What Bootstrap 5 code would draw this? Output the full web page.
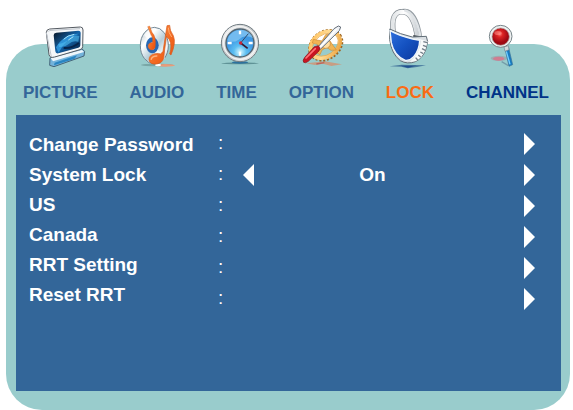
<!DOCTYPE html>
<html lang="en">
<head>
<meta charset="utf-8">
<meta name="viewport" content="width=device-width, initial-scale=1">
<title>Lock settings</title>
<link href="https://cdn.jsdelivr.net/npm/bootstrap@5.3.0/dist/css/bootstrap.min.css" rel="stylesheet">
<style>
body { font-family: "Liberation Sans", Arial, sans-serif; background: #fff; }
.osd { display: flow-root; margin: 44px 3px 0 6px; padding: 0 9px 19px 10px; background: #9cc; border-radius: 36px; }
.osd-tabs { margin-top: -44px; padding: 0 12px 0 7px; }
.osd-tab { color: #369; font-size: 17px; line-height: 20px; font-weight: 700; padding-bottom: 12px; text-decoration: none; }
.osd-tab svg { width: 40px; height: 72px; margin-bottom: 11px; overflow: visible; }
.osd-tab.active { color: #fa6c14; }
.osd-tab.dark { color: #038; }
.osd-panel { background: #369; color: #fff; padding: 13px 26px 77px 13px; font-size: 19px; }
.osd-labels { flex: 0 0 189px; line-height: 30px; padding-top: 2px; font-weight: 700; }
.osd-line { height: 31px; }
.osd-colon { width: 24px; }
.osd-value { padding-top: 2px; padding-right: 32px; font-weight: 700; }
.osd-arrow { border: 0; padding: 0; background: none; color: #fff; line-height: 0; }
.osd-arrow svg { width: 12px; height: 22px; fill: currentColor; }
</style>
<script src="https://cdn.jsdelivr.net/npm/bootstrap@5.3.0/dist/js/bootstrap.bundle.min.js"></script>
</head>
<body>
<main class="osd">
  <nav class="osd-tabs d-flex justify-content-between" aria-label="Menu">
    <a href="#" class="osd-tab d-flex flex-column align-items-center">
      <svg viewBox="121 0 120 216" aria-hidden="true">
        <defs><linearGradient id="scr" x1="0" y1="0" x2="1" y2="1"><stop offset="0" stop-color="#06111f"/><stop offset=".5" stop-color="#1463a8"/><stop offset="1" stop-color="#051a38"/></linearGradient></defs>
        <path d="M151 174 246 146 255 154 253 168 163 200 150 196Z" fill="#73b3db" stroke="#456579" stroke-width="3"/>
        <path d="M153 174 247 150 253 156 160 184Z" fill="#eef6fb"/>
        <path d="M165 188 232 166 225 176 163 196Z" fill="#2885c3"/>
        <path d="M140 98Q140 88 150 87L242 81Q250 81 250 90L249 140Q249 147 241 149L165 171Q151 175 148 164Z" fill="#f5f7f9" stroke="#555b62" stroke-width="3"/>
        <path d="M140 98 155 170M146 94Q149 91 157 91L241 86" fill="none" stroke="#bfc5cc" stroke-width="3"/>
        <path d="M162 106Q162 99 170 98L236 92Q243 92 243 98L242 136Q242 141 236 143L176 160Q168 162 167 154Z" fill="url(#scr)"/>
        <path d="M169 142Q192 102 238 101Q200 112 177 158Z" fill="#2d91d6"/>
        <path d="M176 132Q198 128 209 116Q221 103 239 108L236 125Q219 120 207 132Q195 143 178 141Z" fill="#50bdf0" opacity=".6"/>
        <path d="M192 118Q202 106 224 103M206 120 221 110" fill="none" stroke="#a9e4f8" stroke-width="3"/>
        <path d="M192 144Q216 146 238 129" fill="none" stroke="#07244a" stroke-width="6"/>
      </svg>PICTURE</a>
    <a href="#" class="osd-tab d-flex flex-column align-items-center">
      <svg viewBox="411 0 120 216" aria-hidden="true">
        <defs><linearGradient id="disc" x1="0" y1="0" x2="1" y2="1"><stop offset="0" stop-color="#aab8c1"/><stop offset=".3" stop-color="#fff"/><stop offset=".55" stop-color="#b7ced9"/><stop offset=".75" stop-color="#f9fbfc"/><stop offset="1" stop-color="#8397a6"/></linearGradient>
        <linearGradient id="note" x1="0" y1="0" x2="1" y2="1"><stop offset="0" stop-color="#ff9547"/><stop offset="1" stop-color="#e94b08"/></linearGradient></defs>
        <ellipse cx="471" cy="195" rx="48" ry="4" fill="#79a7a6"/><ellipse cx="496" cy="196" rx="29" ry="4" fill="#e99b79"/><ellipse cx="474" cy="195" rx="9" ry="4" fill="#fff"/>
        <ellipse cx="463" cy="137" rx="42" ry="55" fill="url(#disc)" stroke="#718694" stroke-width="3"/>
        <path d="M463 137 432 105Q446 83 462 84ZM463 137 495 174Q485 188 470 190Z" fill="#fff" opacity=".75"/>
        <ellipse cx="457" cy="136" rx="19" ry="24" fill="#2868b4"/>
        <ellipse cx="457" cy="138" rx="8" ry="11" fill="#d9eef7"/>
        <path d="M443 80 449 78 456 97Q469 110 466 139A11 11 0 1 1 457 128Q460 113 453 105Z" fill="url(#note)" stroke="#c95a25" stroke-width="1"/>
        <path d="M501 77 509 76Q509 92 520 107Q529 128 513 165L509 162Q517 136 508 119L499 109 491 174Q488 189 470 192Q449 194 447 179Q447 164 466 161Q476 159 482 162L489 154Z" fill="url(#note)" stroke="#d65a1d" stroke-width="2"/>
        <path d="M453 179Q457 167 472 168" fill="none" stroke="#ffb27c" stroke-width="4"/>
        <path d="M505 83Q505 98 515 111" fill="none" stroke="#ffaf73" stroke-width="3"/>
      </svg>AUDIO</a>
    <a href="#" class="osd-tab d-flex flex-column align-items-center">
      <svg viewBox="80 0 120 216" aria-hidden="true">
        <defs><linearGradient id="rim" x1="0" y1="0" x2="1" y2="1"><stop offset="0" stop-color="#fff"/><stop offset=".5" stop-color="#b9bdc0"/><stop offset="1" stop-color="#f5f5f5"/></linearGradient>
        <radialGradient id="dial" cx=".5" cy=".82"><stop offset="0" stop-color="#d7f7ff"/><stop offset=".45" stop-color="#5cbef1"/><stop offset="1" stop-color="#3e98e4"/></radialGradient></defs>
        <ellipse cx="149" cy="190" rx="56" ry="3" fill="#5f9296"/><ellipse cx="149" cy="187" rx="25" ry="4" fill="#2c719e"/>
        <circle cx="149" cy="129" r="56" fill="url(#rim)" stroke="#737e84" stroke-width="3"/>
        <circle cx="149" cy="129" r="49" fill="none" stroke="#f4f4f4" stroke-width="4"/>
        <circle cx="149" cy="129" r="42" fill="url(#dial)" stroke="#526470" stroke-width="4"/>
        <path d="M111 121Q119 89 153 89Q179 91 188 114Q163 102 145 119Q127 131 111 121Z" fill="#9ed8fa" opacity=".55"/>
        <path d="M149 92V103M149 155V167M112 129H124M175 129H187" stroke="#fff" stroke-width="7"/>
        <path d="M151 129 174 101" stroke="#334a67" stroke-width="3"/><path d="M151 129 172 145" stroke="#3a1830" stroke-width="5"/><circle cx="151" cy="129" r="5" fill="#cb2638"/>
      </svg>TIME</a>
    <a href="#" class="osd-tab d-flex flex-column align-items-center">
      <svg viewBox="334 0 120 216" aria-hidden="true">
        <defs><linearGradient id="gear" x1="0" y1="0" x2="1" y2="1"><stop offset="0" stop-color="#ffbf58"/><stop offset=".5" stop-color="#ffda91"/><stop offset="1" stop-color="#e99a31"/></linearGradient></defs>
        <path d="M350 190 405 184 457 193 425 198 400 191 375 195Z" fill="#c89d83"/><path d="M380 192 404 188" stroke="#bd645b" stroke-width="4"/>
        <g transform="rotate(-35 407 134)" fill="none"><ellipse cx="407" cy="136" rx="52" ry="40" stroke="#9a6624" stroke-width="9" stroke-dasharray="6 5"/><ellipse cx="407" cy="134" rx="48" ry="36" stroke="url(#gear)" stroke-width="11"/><ellipse cx="407" cy="134" rx="42" ry="30" stroke="#e5a64a" stroke-width="2"/></g>
        <path d="M371 118 397 123 408 104 425 101 419 120 430 136 440 150 424 151 411 142 397 150 391 164 379 158 389 141 383 133 368 129Z" fill="#f1b453" stroke="#d18c34" stroke-width="2"/><circle cx="408" cy="131" r="14" fill="#ffdda0" stroke="#c18437" stroke-width="2"/>
        <path d="M384 142 433 86 446 78 453 81 449 92 392 148Z" fill="#eef1f5" stroke="#656e79" stroke-width="3"/><path d="M391 142 442 86" stroke="#fff" stroke-width="4"/>
        <path d="M374 140 386 137 391 144 388 153 356 184Q347 191 342 187Q337 182 346 171Z" fill="#c91421" stroke="#871017" stroke-width="2"/>
        <path d="M349 174 377 146" stroke="#ff7274" stroke-width="5" stroke-linecap="round"/>
      </svg>OPTION</a>
    <a href="#" class="osd-tab active d-flex flex-column align-items-center" aria-current="page">
      <svg viewBox="51 0 120 216" aria-hidden="true">
        <defs><linearGradient id="steel" x1="0" y1="0" x2="1" y2="0"><stop offset="0" stop-color="#e2e5e7"/><stop offset=".45" stop-color="#fff"/><stop offset="1" stop-color="#cdd2d6"/></linearGradient>
        <linearGradient id="lockface" x1="0" y1="0" x2="1" y2="1"><stop offset="0" stop-color="#2e6fdc"/><stop offset=".5" stop-color="#1451c0"/><stop offset="1" stop-color="#0b369b"/></linearGradient></defs>
        <path d="M50 199 86 194 159 196 132 201 104 205 85 200Z" fill="#47789e"/><path d="M83 197H130L105 203Z" fill="#214f91"/>
        <path d="M72 40Q80 31 96 32Q130 34 142 112" fill="none" stroke="#959da3" stroke-width="12"/>
        <path d="M61 98Q52 36 87 35Q122 35 134 116" fill="none" stroke="#858d93" stroke-width="16"/>
        <path d="M61 98Q52 36 87 35Q122 35 134 116" fill="none" stroke="url(#steel)" stroke-width="12"/>
        <path d="M94 31Q128 36 142 108" fill="none" stroke="#dfe3e6" stroke-width="7"/>
        <path d="M121 112V105L149 110V117" fill="#40474c"/>
        <path d="M50 87Q82 103 118 111L160 109 164 125 158 150Q148 175 127 185Q103 194 82 182Q55 161 50 119Z" fill="#dbe0e4" stroke="#626e77" stroke-width="3"/>
        <path d="M127 114 164 124 156 153Q147 173 129 183L110 186Q141 160 144 122Z" fill="#f8fafa"/>
        <path d="M151 125 163 128M150 136 160 140M147 146 157 151M142 156 151 161M136 165 143 171M128 173 134 180" stroke="#727e88" stroke-width="4"/>
        <path d="M51 92Q82 109 119 117L140 121Q139 151 122 170Q110 183 97 181Q63 167 55 128Z" fill="url(#lockface)" stroke="#eef5fb" stroke-width="4"/>
      </svg>LOCK</a>
    <a href="#" class="osd-tab dark d-flex flex-column align-items-center">
      <svg viewBox="343 0 120 216" aria-hidden="true">
        <defs><radialGradient id="lens" cx=".45" cy=".35"><stop offset="0" stop-color="#ff7771"/><stop offset=".35" stop-color="#dc2424"/><stop offset="1" stop-color="#9e0712"/></radialGradient></defs>
        <ellipse cx="379" cy="175" rx="25" ry="8" fill="#9baeb3"/><ellipse cx="378" cy="176" rx="17" ry="6" fill="#cf7d91"/><path d="M387 185 407 197" stroke="#759da9" stroke-width="4"/>
        <path d="M397 147 408 143 420 194 409 199Z" fill="#167ac1" stroke="#3f7597" stroke-width="2"/>
        <path d="M401 154 412 193" stroke="#75d1ff" stroke-width="4"/><path d="M394 141 407 137 409 149 397 154Z" fill="#d3d9dd" stroke="#788690" stroke-width="2"/>
        <ellipse cx="384" cy="109" rx="34" ry="33" fill="#eef0f0" stroke="#78858a" stroke-width="3"/>
        <circle cx="384" cy="110" r="26" fill="url(#lens)" stroke="#a5a1a0" stroke-width="2"/>
        <ellipse cx="376" cy="99" rx="11" ry="6" fill="#ff9a91" opacity=".5"/>
      </svg>CHANNEL</a>
  </nav>

  <section class="osd-panel d-flex" aria-label="Lock">
    <div class="osd-labels text-nowrap">
      <div id="password">Change Password</div>
      <div id="system">System Lock</div>
      <div id="us">US</div>
      <div id="canada">Canada</div>
      <div id="rrt">RRT Setting</div>
      <div id="reset">Reset RRT</div>
    </div>
    <div class="flex-grow-1">
      <div class="osd-line d-flex align-items-center"><span class="osd-colon">:</span><button type="button" class="osd-arrow ms-auto" aria-labelledby="password"><svg viewBox="0 0 12 22"><path d="M1 0 12 11 1 22Z"/></svg></button></div>
      <div class="osd-line d-flex align-items-center"><span class="osd-colon">:</span><button type="button" class="osd-arrow" aria-label="Previous System Lock value"><svg viewBox="0 0 12 22"><path d="M12 0 1 11 12 22Z"/></svg></button><span class="osd-value flex-grow-1 text-center">On</span><button type="button" class="osd-arrow" aria-label="Next System Lock value"><svg viewBox="0 0 12 22"><path d="M1 0 12 11 1 22Z"/></svg></button></div>
      <div class="osd-line d-flex align-items-center"><span class="osd-colon">:</span><button type="button" class="osd-arrow ms-auto" aria-labelledby="us"><svg viewBox="0 0 12 22"><path d="M1 0 12 11 1 22Z"/></svg></button></div>
      <div class="osd-line d-flex align-items-center"><span class="osd-colon">:</span><button type="button" class="osd-arrow ms-auto" aria-labelledby="canada"><svg viewBox="0 0 12 22"><path d="M1 0 12 11 1 22Z"/></svg></button></div>
      <div class="osd-line d-flex align-items-center"><span class="osd-colon">:</span><button type="button" class="osd-arrow ms-auto" aria-labelledby="rrt"><svg viewBox="0 0 12 22"><path d="M1 0 12 11 1 22Z"/></svg></button></div>
      <div class="osd-line d-flex align-items-center"><span class="osd-colon">:</span><button type="button" class="osd-arrow ms-auto" aria-labelledby="reset"><svg viewBox="0 0 12 22"><path d="M1 0 12 11 1 22Z"/></svg></button></div>
    </div>
  </section>
</main>
</body>
</html>
